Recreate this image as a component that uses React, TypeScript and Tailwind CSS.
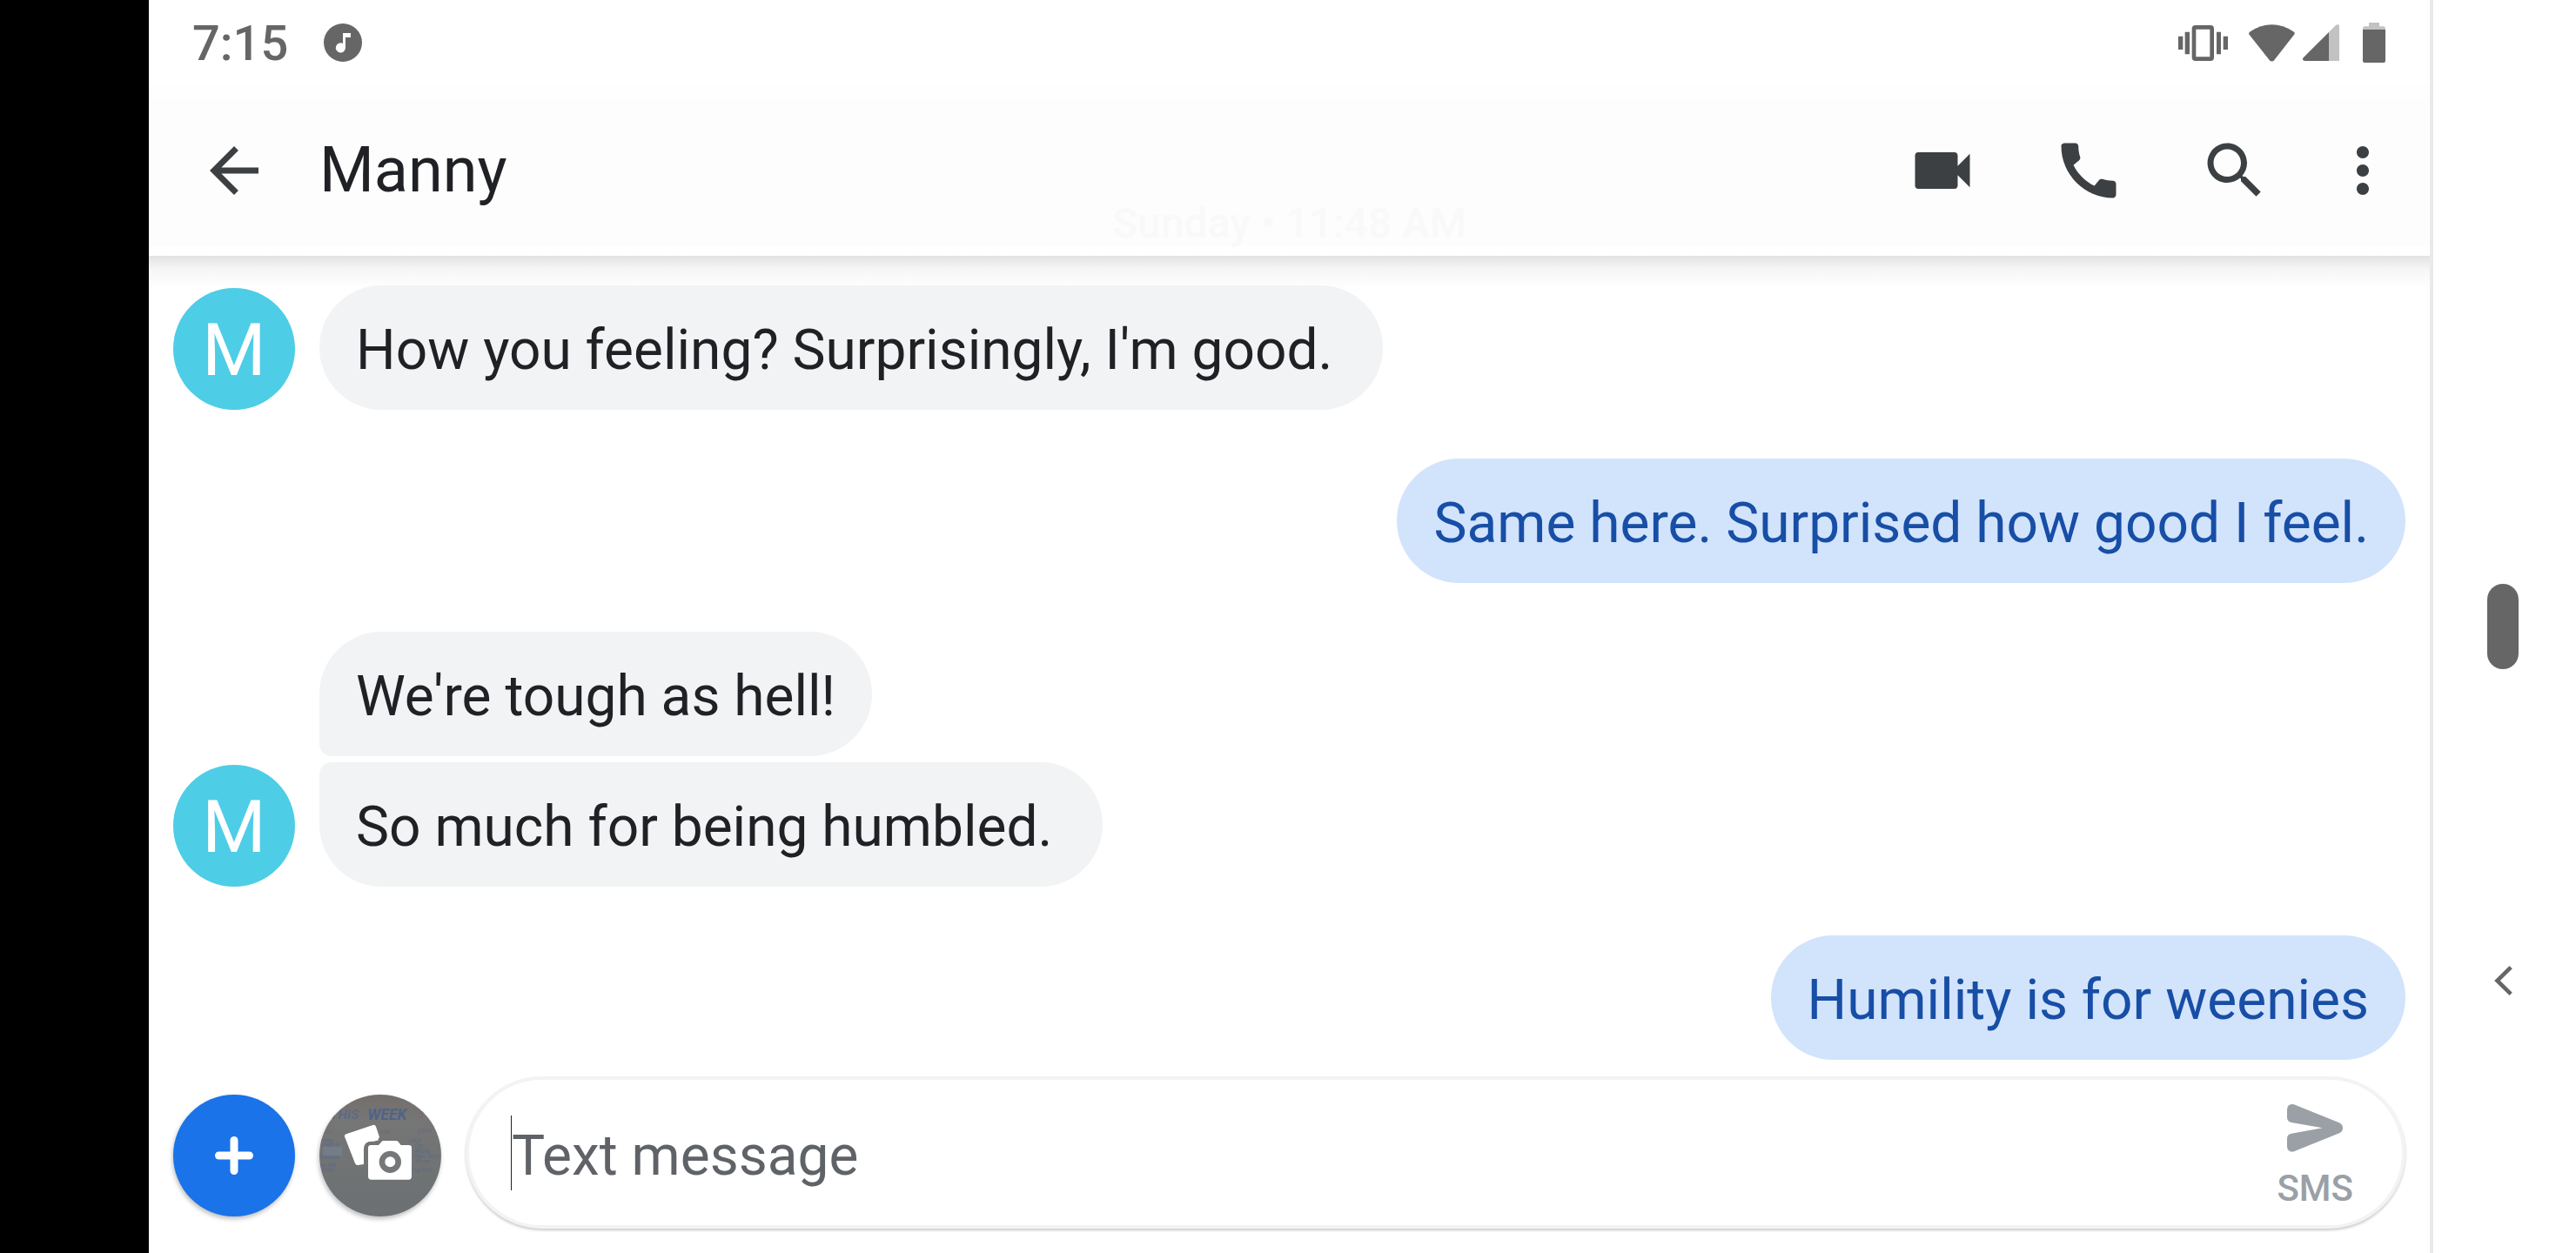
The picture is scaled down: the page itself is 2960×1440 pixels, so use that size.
import type { ReactNode } from "react";
import clsx from "clsx";

type Message = {
  text: string;
  mine?: boolean;
  avatar?: boolean;
  position?: "first" | "last";
};

// Consecutive messages from one sender share a group.
const groups: Message[][] = [
  [{ text: "How you feeling? Surprisingly, I'm good. ", avatar: true }],
  [{ text: "Same here. Surprised how good I feel.", mine: true }],
  [
    { text: "We're tough as hell!", position: "first" },
    { text: "So much for being humbled. ", avatar: true, position: "last" },
  ],
  [{ text: "Humility is for weenies", mine: true }],
];

const actions = [
  {
    label: "Video call",
    path: "M17 10.5V7c0-.55-.45-1-1-1H4c-.55 0-1 .45-1 1v10c0 .55.45 1 1 1h12c.55 0 1-.45 1-1v-3.5l4 4v-11l-4 4z",
  },
  {
    label: "Call",
    path: "M20.01 15.38c-1.23 0-2.42-.2-3.53-.56-.35-.12-.74-.03-1.01.24l-1.57 1.97c-2.83-1.35-5.48-3.9-6.89-6.83l1.95-1.66c.27-.28.35-.67.24-1.02-.37-1.11-.56-2.3-.56-3.53 0-.54-.45-.99-.99-.99H4.19C3.65 3 3 3.24 3 3.99 3 13.28 10.73 21 20.01 21c.71 0 .99-.63.99-1.18v-3.45c0-.54-.45-.99-.99-.99z",
  },
  {
    label: "Search",
    path: "M15.5 14h-.79l-.28-.27C15.41 12.59 16 11.11 16 9.5 16 5.91 13.09 3 9.5 3S3 5.91 3 9.5 5.91 16 9.5 16c1.61 0 3.09-.59 4.23-1.57l.27.28v.79l5 4.99L20.49 19l-4.99-5zm-6 0C7.01 14 5 11.99 5 9.5S7.01 5 9.5 5 14 7.01 14 9.5 11.99 14 9.5 14z",
  },
];

function IconButton({ label, children }: { label: string; children: ReactNode }) {
  return (
    <button type="button" aria-label={label} className="size-[84px] text-[#3c4043]">
      <svg viewBox="0 0 24 24" className="size-full" fill="currentColor">
        {children}
      </svg>
    </button>
  );
}

function StatusBar() {
  return (
    <div className="flex h-[98px] items-center justify-between pr-[51px] pl-[50px] text-[#666666]">
      <div className="flex items-center gap-[41px]">
        <time className="pt-[2px] text-[56px] leading-[84px] font-medium">7:15</time>
        <svg viewBox="0 0 44 44" className="size-[44px]">
          <circle cx="22" cy="22" r="22" fill="currentColor" />
          <path d="M22 11h9v5h-6v12a5.6 5.6 0 1 1-3-5z" fill="#fff" />
        </svg>
      </div>
      <div className="flex items-center">
        <svg viewBox="129 84 171 123" className="mr-[24px] h-[41px] w-[57px]" fill="currentColor">
          <path d="M129 122h16v46h-16zM152 107h16v77h-16zM261 107h15v77h-15zM284 122h16v46h-16z" />
          <rect x="183" y="91" width="62" height="109" rx="5" fill="none" stroke="currentColor" strokeWidth="14" />
        </svg>
        <svg viewBox="372 79 160 129" className="mr-[9px] h-[43px] w-[53px]" fill="currentColor">
          <path d="M373 113q-2-5 3-9 76-49 152 0 5 4 2 9l-70 90q-8 8-16 0z" />
        </svg>
        <svg viewBox="558 87 126 126" className="mr-[27px] size-[42px]" fill="currentColor">
          <path d="M648 114l24-24q12-7 12 4v119h-36z" opacity=".4" />
          <path d="M648 114v99h-84q-10-3-4-11z" />
        </svg>
        <svg viewBox="765 78 78 138" className="h-[46px] w-[26px]" fill="currentColor">
          <path d="M786 78h36v13h15q6 0 6 11h-78q0-11 6-11h15z" opacity=".4" />
          <path d="M765 102h78v108q0 6-6 6h-66q-6 0-6-6z" />
        </svg>
      </div>
    </div>
  );
}

function AppBar() {
  return (
    <header className="relative flex h-[196px] items-center border-t-[17px] border-b-[11px] border-t-[#fefefe] border-b-white bg-[#fdfdfd] pr-[35px] pb-[6px] pl-[56px]">
      <IconButton label="Back">
        <path d="M20 11H7.83l5.59-5.59L12 4l-8 8 8 8 1.41-1.41L7.83 13H20v-2z" />
      </IconButton>
      <h1 className="ml-[56px] flex-1 text-[72px] leading-[84px] text-[#202124]">Manny</h1>
      <div className="flex gap-[84px]">
        {actions.map((action) => (
          <IconButton key={action.label} label={action.label}>
            <path d={action.path} />
          </IconButton>
        ))}
      </div>
      <div className="ml-[63px] flex">
        <IconButton label="More options">
          <path d="M12 8c1.1 0 2-.9 2-2s-.9-2-2-2-2 .9-2 2 .9 2 2 2zm0 2c-1.1 0-2 .9-2 2s.9 2 2 2 2-.9 2-2-.9-2-2-2zm0 6c-1.1 0-2 .9-2 2s.9 2 2 2 2-.9 2-2-.9-2-2-2z" />
        </IconButton>
      </div>
      {/* date divider showing faintly through the bar */}
      <p className="absolute inset-x-0 bottom-0 text-center text-[48px] leading-[52px] font-medium text-[#f9f9f9]">
        Sunday • 11:48 AM
      </p>
      <div className="absolute inset-x-0 top-full mt-[11px] h-[38px] bg-linear-to-b from-[#e2e2e2] via-[#f6f6f6] via-40% to-white" />
    </header>
  );
}

function MessageRow({ message }: { message: Message }) {
  const { text, mine, avatar, position } = message;
  return (
    <li className={clsx("flex items-end", mine && "justify-end")}>
      {!mine && (
        <div className="mr-[28px] w-[140px] shrink-0">
          {avatar && (
            <div className="flex size-[140px] items-center justify-center rounded-full bg-[#4ecde6] pt-[3px] text-[84px] leading-none text-white">
              M
            </div>
          )}
        </div>
      )}
      <p
        className={clsx(
          "rounded-[72px] px-[42px] pt-[34px] pb-[27px] text-[64px] leading-[82px] whitespace-pre-wrap",
          mine ? "bg-[#d2e3fc] text-[#174ea6]" : "bg-[#f1f3f4] text-[#202124]",
          position === "first" && "rounded-bl-[14px]",
          position === "last" && "rounded-tl-[14px]",
        )}
      >
        {text}
      </p>
    </li>
  );
}

function CameraIcon() {
  return (
    <svg viewBox="21 24 420 420" className="size-full">
      <defs>
        <linearGradient id="board" x1="0" y1="0" x2="0" y2="1">
          <stop offset="0" stopColor="#746e6c" />
          <stop offset=".2" stopColor="#757675" />
          <stop offset="1" stopColor="#6c7073" />
        </linearGradient>
      </defs>
      <rect x="21" y="24" width="420" height="420" fill="url(#board)" />
      <path d="M34 202h66v34H34z" fill="#747c88" />
      {/* whiteboard handwriting */}
      <g fill="#5c6985" fontFamily="Roboto, sans-serif" fontSize="20" fontStyle="italic">
        <text x="58" y="109" fontSize="46" fontWeight="500">THIS</text>
        <text x="187" y="110" fontSize="53" fontWeight="700" fill="#506389">WEEK</text>
        <text x="362" y="106" fontSize="30" fill="#86656b">S</text>
        <g fill="#75657a">
          <text x="42" y="158">CF</text>
          <text x="232" y="160">mal</text>
          <text x="358" y="156">@MIX</text>
        </g>
        <text x="26" y="188">nday,</text>
        <text x="26" y="204">meet in</text>
        <text x="24" y="247">wednes</text>
        <text x="24" y="274">on the</text>
        <text x="30" y="291">letter</text>
        <text x="328" y="188">class</text>
        <text x="350" y="207">Cer</text>
        <text x="350" y="224">Music</text>
        <text x="348" y="242">Rain Tech</text>
        <text x="350" y="260">PE on</text>
        <text x="338" y="290">t up Run</text>
      </g>
      <path
        d="M116 159l89-30q8-3 11 5l12 36q-4 4-5 13-7-3-12 2h-10q-27 0-27 27v52l-20 3q-7 1-10-6l-36-92q-2-7 8-10z"
        fill="#fff"
      />
      <path
        d="M199 198h26l10-11q3-4 8-4h42q5 0 8 4l9 11h27q10 0 10 10v98q0 11-11 11H200q-11 0-11-11v-98q0-10 10-10z"
        fill="#fff"
      />
      <circle cx="265" cy="256" r="28" fill="#fff" stroke="#757778" strokeWidth="20" />
    </svg>
  );
}

function Composer() {
  return (
    <form
      className="flex items-center gap-[28px] px-[28px] pt-[19px] pb-[28px]"
      onSubmit={(event) => event.preventDefault()}
    >
      <div className="flex shrink-0 gap-[28px] pt-[7px]">
        <button
          type="button"
          aria-label="Add attachment"
          className="flex size-[140px] items-center justify-center rounded-full bg-[#1a73e8] shadow-[-1px_3px_5px_rgba(0,0,0,0.25)]"
        >
          <svg viewBox="0 0 44 44" className="size-[44px]" fill="#fff">
            <rect x="17.5" width="9" height="44" rx="4.5" />
            <rect y="17.5" width="44" height="9" rx="4.5" />
          </svg>
        </button>
        <button
          type="button"
          aria-label="Camera and gallery"
          className="size-[140px] overflow-hidden rounded-full shadow-[-1px_3px_5px_rgba(0,0,0,0.25)]"
        >
          <CameraIcon />
        </button>
      </div>
      <div className="flex h-[175px] flex-1 items-center rounded-full border-[4px] border-[#f1f3f4] bg-white pr-[56px] pl-[48px] shadow-[0_2px_3px_rgba(0,0,0,0.2)]">
        <span className="h-[86px] w-px bg-[#202124]" />
        <input
          type="text"
          aria-label="Text message"
          placeholder="Text message"
          className="h-full min-w-0 flex-1 bg-transparent pt-[7px] text-[64px] text-[#202124] outline-none placeholder:text-[#5f6368] placeholder:opacity-100"
        />
        <button type="submit" className="flex flex-col items-center text-[#9aa0a6]">
          <svg viewBox="561 629 192 165" className="mt-[14px] h-[55px] w-[64px]" fill="currentColor">
            <path d="M561 648q0-19 19-19l5 1 156 63q12 6 12 18t-12 18l-156 63-5 1q-19 0-19-19v-26q0-16 15-18l107-19-107-19q-15-3-15-18z" />
          </svg>
          <span className="mt-[14px] text-[42px] leading-[56px] font-medium">SMS</span>
        </button>
      </div>
    </form>
  );
}

export default function App() {
  return (
    <div className="flex min-h-screen bg-white font-['Roboto','Liberation_Sans',sans-serif]">
      <div className="w-[171px] shrink-0 bg-black" />
      <div className="flex min-w-0 flex-1 flex-col">
        <StatusBar />
        <AppBar />
        <main className="flex flex-1 flex-col">
          <ul className="relative flex flex-1 flex-col gap-[56px] px-[28px] pt-[34px]">
            {groups.map((group, index) => (
              <li key={index}>
                <ul className="flex flex-col gap-[7px]">
                  {group.map((message) => (
                    <MessageRow key={message.text} message={message} />
                  ))}
                </ul>
              </li>
            ))}
          </ul>
          <Composer />
        </main>
      </div>
      <nav className="grid w-[168px] shrink-0 grid-rows-[1fr_auto_1fr] justify-items-center border-l-[4px] border-[#e8eaed] pr-[4px]">
        <button type="button" aria-label="Home" className="row-start-2 h-[98px] w-[36px] rounded-full bg-[#666666]" />
        <button type="button" aria-label="Back" className="row-start-3 mt-[341px] self-start text-[#666666]">
          <svg viewBox="0 0 62 102" className="h-[34px] w-[21px]" fill="none" stroke="currentColor" strokeWidth="14">
            <path d="M57 5L10 51l47 46" />
          </svg>
        </button>
      </nav>
    </div>
  );
}
